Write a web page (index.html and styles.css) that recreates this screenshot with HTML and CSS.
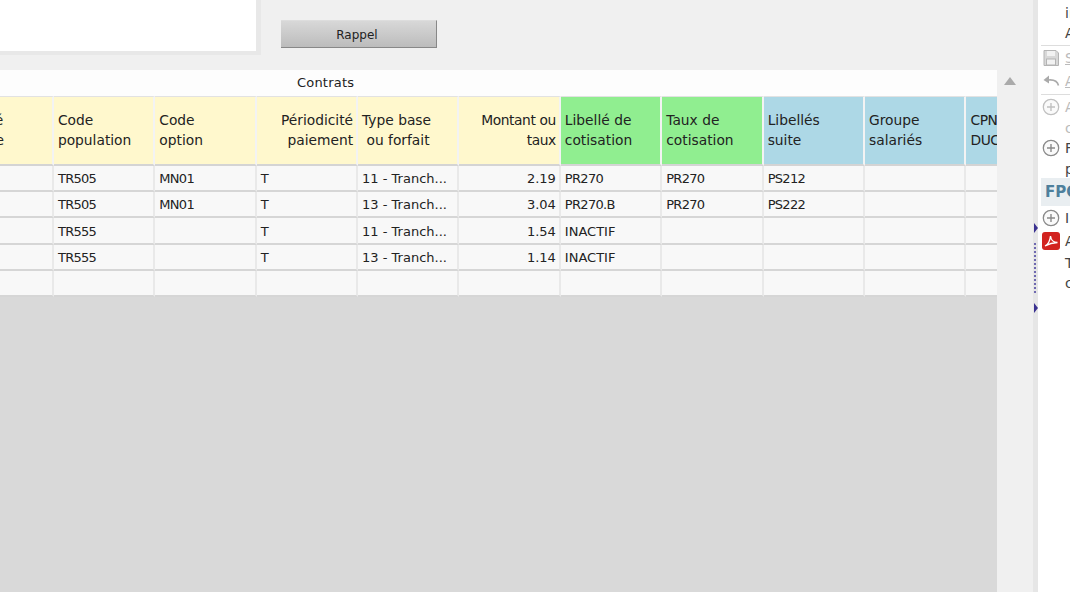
FILE: index.html
```html
<!DOCTYPE html>
<html lang="fr">
<head>
    <meta charset="UTF-8">
    <meta name="viewport" content="width=device-width, initial-scale=1.0">
    <title>Contrats</title>
    <link rel="stylesheet" href="styles.css">
</head>
<body>
    <div class="main">
        <div class="content">
            <div class="top-bar">
                <div class="memo-box"></div>
                <button class="btn-rappel">Rappel</button>
            </div>
            <div class="grid-area">
                <div class="grid-title">Contrats</div>
                <div class="grid-clip">
                    <table class="grid">
                        <thead>
                            <tr>
                                <th class="yellow cut">Qualité<br>Groupe</th>
                                <th class="yellow">Code<br>population</th>
                                <th class="yellow">Code<br>option</th>
                                <th class="yellow right">Périodicité<br>paiement</th>
                                <th class="yellow">Type base<br>&nbsp;ou forfait</th>
                                <th class="yellow right tight">Montant ou<br>taux</th>
                                <th class="green">Libellé de<br>cotisation</th>
                                <th class="green">Taux de<br>cotisation</th>
                                <th class="blue">Libellés<br>suite</th>
                                <th class="blue">Groupe<br>salariés</th>
                                <th class="blue tight">CPN<br>DUCS</th>
                            </tr>
                        </thead>
                        <tbody>
                            <tr>
                                <td></td><td class="code">TR505</td><td class="code">MN01</td><td>T</td><td>11 - Tranch...</td><td class="right">2.19</td><td class="code">PR270</td><td class="code">PR270</td><td class="code">PS212</td><td></td><td></td>
                            </tr>
                            <tr>
                                <td></td><td class="code">TR505</td><td class="code">MN01</td><td>T</td><td>13 - Tranch...</td><td class="right">3.04</td><td class="code">PR270.B</td><td class="code">PR270</td><td class="code">PS222</td><td></td><td></td>
                            </tr>
                            <tr class="tall">
                                <td></td><td class="code">TR555</td><td></td><td>T</td><td>11 - Tranch...</td><td class="right">1.54</td><td>INACTIF</td><td></td><td></td><td></td><td></td>
                            </tr>
                            <tr>
                                <td></td><td class="code">TR555</td><td></td><td>T</td><td>13 - Tranch...</td><td class="right">1.14</td><td>INACTIF</td><td></td><td></td><td></td><td></td>
                            </tr>
                            <tr>
                                <td></td><td></td><td></td><td></td><td></td><td></td><td></td><td></td><td></td><td></td><td></td>
                            </tr>
                        </tbody>
                    </table>
                </div>
            </div>
        </div>

        <div class="scroll-col">
            <div class="scroll-up"></div>
        </div>

        <div class="splitter">
            <div class="handle"></div>
            <div class="dots"></div>
            <div class="handle"></div>
        </div>

        <div class="side">
            <div class="side-line first">in</div>
            <div class="side-line">Ac</div>
            <div class="side-action off sep">
                <svg class="icon" viewBox="0 0 18 18"><path d="M2 1.500h12l2.500 2.500v12.500h-14.500z" fill="#d8d8d8" stroke="#b4b4b4"/><rect x="5" y="2" width="8" height="5" fill="#f2f2f2"/><rect x="4.500" y="10" width="9" height="6" fill="#f2f2f2" stroke="#b4b4b4"/></svg>
                <span class="link">Sa</span>
            </div>
            <div class="side-action off">
                <svg class="icon" viewBox="0 0 18 18"><path d="M16.500 13.500c-1-4-4.500-6-10-5.500" fill="none" stroke="#aaa" stroke-width="1.600"/><path d="M7 3.500l-5.500 4.500 5.500 3.500z" fill="#aaa"/></svg>
                <span class="link">An</span>
            </div>
            <div class="side-action off sep">
                <svg class="icon" viewBox="0 0 18 18"><circle cx="9" cy="9" r="7.700" fill="#fafafa" stroke="#c0c0c0" stroke-width="1.300"/><path d="M9 5v8M5 9h8" stroke="#c0c0c0" stroke-width="1.400"/></svg>
                <span>Aj</span>
            </div>
            <div class="side-line indent off">co</div>
            <div class="side-action">
                <svg class="icon" viewBox="0 0 18 18"><circle cx="9" cy="9" r="7.700" fill="#fafafa" stroke="#8a8a8a" stroke-width="1.300"/><path d="M9 5v8M5 9h8" stroke="#8a8a8a" stroke-width="1.400"/></svg>
                <span>Fa</span>
            </div>
            <div class="side-line indent">pa</div>
            <div class="side-head">FPC</div>
            <div class="side-action">
                <svg class="icon" viewBox="0 0 18 18"><circle cx="9" cy="9" r="7.700" fill="#fafafa" stroke="#8a8a8a" stroke-width="1.300"/><path d="M9 5v8M5 9h8" stroke="#8a8a8a" stroke-width="1.400"/></svg>
                <span>In</span>
            </div>
            <div class="side-action">
                <svg class="icon" viewBox="0 0 18 18"><rect width="18" height="18" rx="3" fill="#d2231f"/><path d="M3 14c3-1.500 5-5.500 5.500-10 .5 4 3 6.500 7 6.500-4 .2-8 1-12.500 3.500z" fill="none" stroke="#fff" stroke-width="1.300"/></svg>
                <span>At</span>
            </div>
            <div class="side-line note">Te</div>
            <div class="side-line">co</div>
        </div>
    </div>
</body>
</html>
```

FILE: styles.css
```css
html, body {
    margin: 0;
    height: 100%;
    overflow: hidden;
}
body {
    font-family: 'DejaVu Sans', sans-serif;
    font-size: 13px;
    color: #222;
    background-color: #f0f0f0;
}
.main {
    display: flex;
    height: 592px;
}
.content {
    width: 997px;
    display: flex;
    flex-direction: column;
    flex-shrink: 0;
}
.top-bar {
    height: 70px;
    flex-shrink: 0;
    display: flex;
    align-items: flex-start;
}
.memo-box {
    width: 256px;
    height: 51px;
    background-color: #fff;
    border-right: 5px solid #e8e8e8;
    border-bottom: 4px solid #e8e8e8;
}
.btn-rappel {
    width: 156px;
    height: 28px;
    margin: 20px 0 0 20px;
    padding: 1px 3px 0 0;
    font-family: inherit;
    font-size: 12px;
    color: #222;
    background: linear-gradient(#d8d8d8, #bcbcbc);
    border: none;
    border-right: 1px solid #888;
    border-bottom: 1px solid #888;
    border-top: 1px solid #ddd;
}
.grid-area {
    flex: 1;
    display: flex;
    flex-direction: column;
    background-color: #d9d9d9;
}
.grid-title {
    height: 26px;
    line-height: 26px;
    padding-left: 297px;
    letter-spacing: 0.2px;
    background-color: #fdfdfd;
}
.grid-clip {
    overflow: hidden;
}
.grid {
    border-collapse: separate;
    border-spacing: 0;
    table-layout: fixed;
    width: 1115.400px;
    margin-left: -47.500px;
}
.grid th, .grid td {
    width: 101.400px;
    box-sizing: border-box;
    padding: 1px 3px 0 4px;
    overflow: hidden;
    white-space: nowrap;
    text-align: left;
    border-right: 2px solid #e9e9e9;
}
.grid th {
    height: 70px;
    padding-top: 0;
    padding-bottom: 1px;
    font-size: 13.800px;
    font-weight: normal;
    line-height: 20.500px;
    color: #222;
    border-top: 1px solid #e2e2e2;
    border-bottom: 2px solid #d4d4d4;
    border-right-color: #f3f3f3;
}
.grid td {
    height: 26px;
    background-color: #f8f8f8;
    border-bottom: 2px solid #d6d6d6;
}
.grid .tall td {
    height: 27px;
}
.grid .right {
    text-align: right;
}
.grid .cut {
    padding-left: 1px;
}
.grid .tight {
    letter-spacing: -0.4px;
}
.grid .code {
    letter-spacing: -0.7px;
}
.yellow {
    background-color: #fff8cd;
}
.green {
    background-color: #90ee90;
}
.blue {
    background-color: #add8e6;
}
.scroll-col {
    width: 36px;
    flex-shrink: 0;
    padding-top: 77px;
    box-sizing: border-box;
}
.scroll-up {
    width: 0;
    height: 0;
    margin-left: 7px;
    border-left: 6px solid transparent;
    border-right: 6px solid transparent;
    border-bottom: 8px solid #aaa;
}
.splitter {
    width: 5px;
    flex-shrink: 0;
    box-sizing: border-box;
    padding-top: 223px;
    background-color: #e6e6e6;
    display: flex;
    flex-direction: column;
    align-items: flex-start;
    gap: 10px;
}
.handle {
    width: 0;
    height: 0;
    margin-left: 1px;
    border-top: 5px solid transparent;
    border-bottom: 5px solid transparent;
    border-left: 4px solid #3a3190;
}
.dots {
    width: 0;
    height: 50px;
    margin-left: 1px;
    border-left: 2px dotted #6f69b0;
}
.side {
    flex: 1;
    min-width: 0;
    overflow: hidden;
    background-color: #fff;
    padding-left: 3px;
    font-size: 14px;
    color: #444;
    white-space: nowrap;
}
.side-line {
    height: 20px;
    line-height: 20px;
    padding-left: 24px;
}
.side-line.first {
    margin-top: 3px;
}
.side-line.indent {
    height: 18px;
}
.side-line.note {
    margin-top: 1px;
}
.side-action {
    height: 23px;
    display: flex;
    align-items: center;
    gap: 5px;
    padding-left: 1px;
}
.side-action.sep {
    border-top: 1px solid #ddd;
    margin-top: 2px;
}
.off {
    color: #bbb;
}
.link {
    text-decoration: underline;
}
.icon {
    width: 18px;
    height: 18px;
    flex-shrink: 0;
}
.side-head {
    height: 28px;
    line-height: 28px;
    margin-top: 1px;
    padding-left: 4px;
    font-size: 15px;
    font-weight: bold;
    color: #4d7f9c;
    background-color: #e9eef1;
}
```
